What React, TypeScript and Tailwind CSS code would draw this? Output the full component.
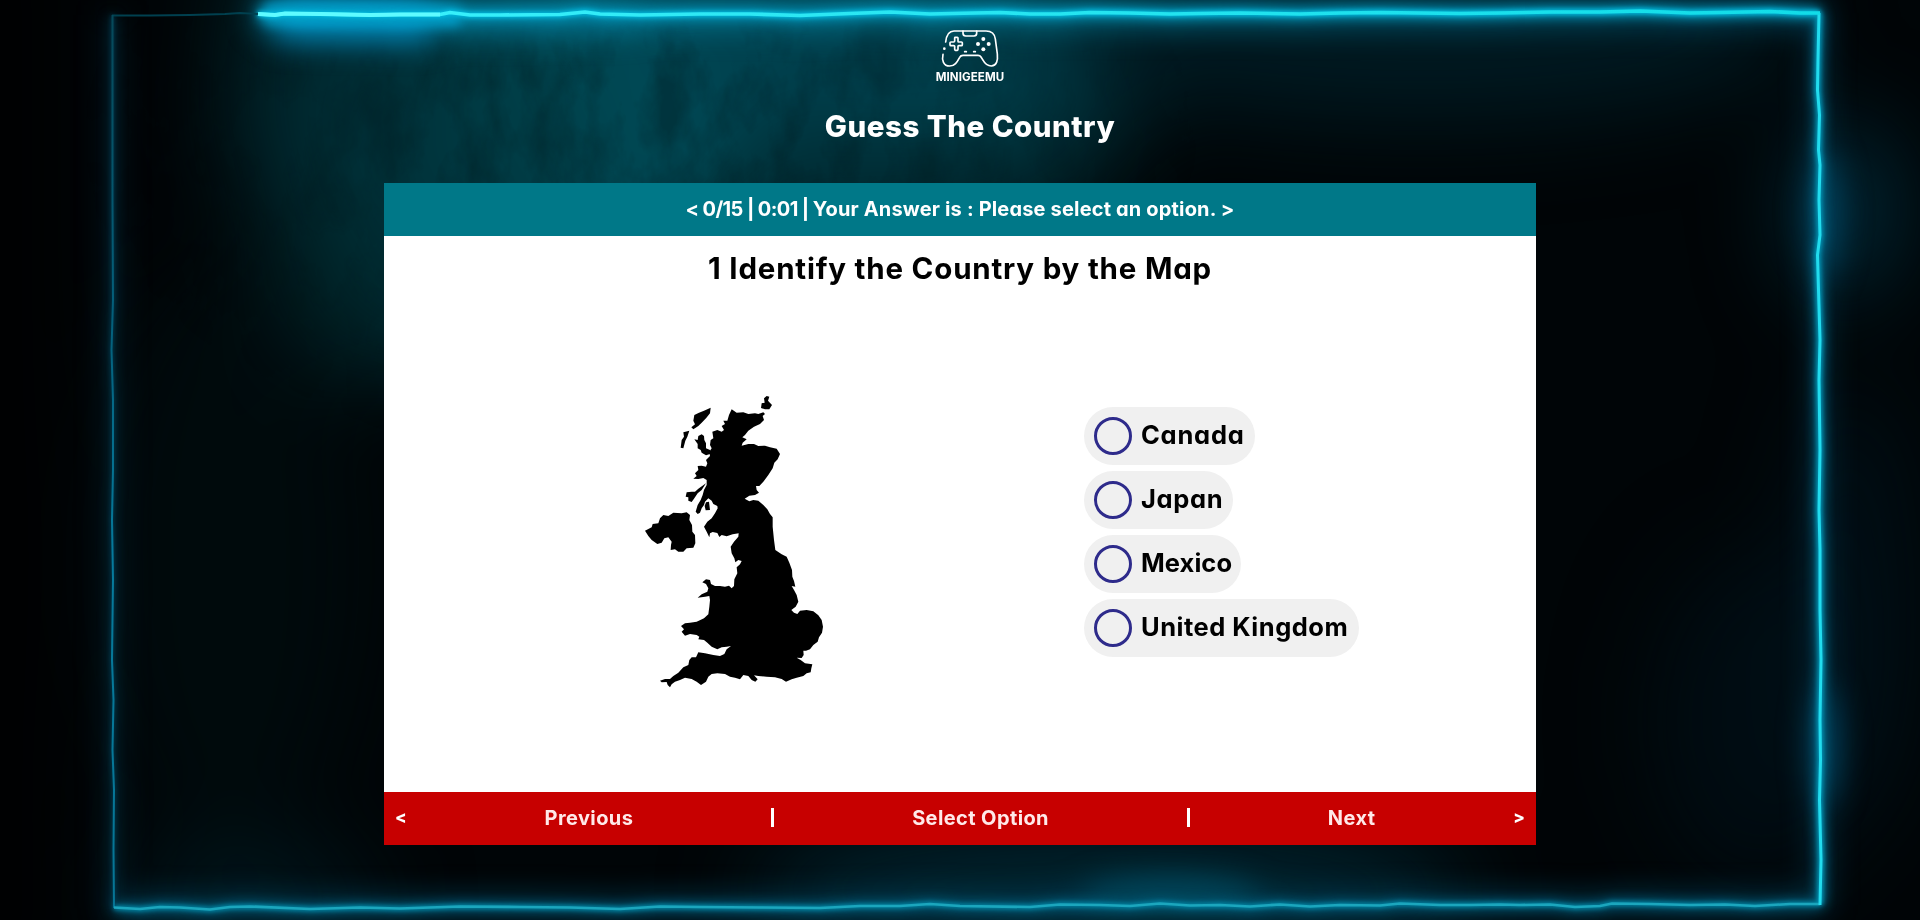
const SANS = "font-['Inter','Liberation_Sans',sans-serif] [font-feature-settings:'cv11']";

const TOP_LINE =
  "M258 14 L275 15 L285 13.5 L320 14 L370 15 L400 14.5 L440 14.5 L450 12.5 L470 15 L500 15 L560 14.5 L585 12 L600 14 L640 15 L700 14 L750 14 L800 15.5 L850 13.5 L890 12 L930 14 L975 13 L1000 12.5 L1030 14 L1060 14 L1090 12.5 L1130 13 L1170 14 L1200 13.5 L1240 13 L1300 14 L1340 13 L1380 12.5 L1420 13 L1460 13.5 L1500 13 L1550 12 L1600 12 L1640 11 L1690 13 L1720 12.5 L1770 11.5 L1800 13 L1820 13";
const RIGHT_LINE =
  "M1819 13 L1818 60 L1817.5 90 L1819.5 115 L1818.5 150 L1820 165 L1819 200 L1820 235 L1817.5 255 L1818.5 290 L1820 340 L1819 380 L1820 450 L1819 510 L1820 550 L1820 610 L1821 660 L1820 720 L1820.5 760 L1819.5 800 L1820 820 L1821 860 L1820 905";
const BOTTOM_LINE =
  "M1820 904 L1790 904 L1755 906 L1725 904.5 L1690 905 L1650 904 L1612 903.5 L1600 906 L1575 907 L1550 904.5 L1520 905 L1500 904.5 L1470 905 L1440 905 L1400 903.5 L1380 905.5 L1340 905 L1310 906.5 L1280 904.5 L1250 906.5 L1220 905 L1190 905.5 L1160 903.5 L1130 906 L1100 905 L1060 904.5 L1030 907 L960 906 L930 904 L900 906 L860 906 L820 908 L760 907.5 L700 907 L660 906.5 L620 909 L570 907.5 L520 907 L460 906.5 L400 908.5 L360 907.5 L310 909 L250 906.5 L230 907 L210 909.5 L180 907.5 L160 907 L140 909 L114 907.5";
const LEFT_LINE =
  "M114 908 L113.5 850 L114 790 L112.5 750 L113.5 700 L112 660 L113 580 L112 520 L113 470 L113 400 L111.5 350 L113 300 L112.5 200 L112.5 100 L112.5 15";
const TOP_LEFT_LINE = "M112 15.5 L150 15.5 L190 15 L225 14 L240 13 L258 14";

function Blur({ id, deviation }: { id: string; deviation: number }) {
  return (
    <filter id={id} x="-300" y="-300" width="2520" height="1520" filterUnits="userSpaceOnUse" colorInterpolationFilters="sRGB">
      <feGaussianBlur stdDeviation={deviation} />
    </filter>
  );
}

function Backdrop() {
  return (
    <svg className="absolute inset-0 h-[920px] w-[1920px]" viewBox="0 0 1920 920" fill="none" aria-hidden="true">
      <defs>
        <Blur id="b2" deviation={2} />
        <Blur id="b7" deviation={6} />
        <Blur id="b16" deviation={15} />
        <Blur id="b50" deviation={46} />
        <filter id="grain" x="0" y="0" width="1920" height="920" filterUnits="userSpaceOnUse" colorInterpolationFilters="sRGB">
          <feTurbulence type="fractalNoise" baseFrequency="0.02 0.011" numOctaves="5" seed="8" />
          <feColorMatrix values="0 0 0 0 0  0 0 0 0 0.06  0 0 0 0 0.07  2.6 0 0 0 -1" />
        </filter>
        <linearGradient id="topStroke" x1="258" x2="1820" y1="0" y2="0" gradientUnits="userSpaceOnUse">
          <stop offset="0" stopColor="#3df4ff" />
          <stop offset="0.3" stopColor="#2ee8f4" />
          <stop offset="1" stopColor="#12dce8" />
        </linearGradient>
        <linearGradient id="topGlow" x1="258" x2="1820" y1="0" y2="0" gradientUnits="userSpaceOnUse">
          <stop offset="0" stopColor="#0088ae" />
          <stop offset="0.5" stopColor="#007c99" />
          <stop offset="1" stopColor="#004a66" />
        </linearGradient>
        <linearGradient id="leftStroke" x1="0" x2="0" y1="15" y2="908" gradientUnits="userSpaceOnUse">
          <stop offset="0" stopColor="#06495a" />
          <stop offset="0.35" stopColor="#04607c" />
          <stop offset="0.6" stopColor="#067a9c" />
          <stop offset="1" stopColor="#067595" />
        </linearGradient>
      </defs>
      <rect width="1920" height="920" fill="#000507" />
      <g filter="url(#b50)">
        <rect x="-100" y="-100" width="170" height="1120" fill="#000102" />
        <path d="M250 -60 H1300 L1180 70 L1060 220 L700 300 L560 380 L330 370 L230 130 Z" fill="#002930" />
        <ellipse cx="600" cy="100" rx="150" ry="150" fill="#004a56" />
        <ellipse cx="470" cy="170" rx="130" ry="150" fill="#003840" opacity="0.7" />
        <ellipse cx="900" cy="40" rx="260" ry="100" fill="#004452" opacity="0.85" />
        <ellipse cx="1420" cy="30" rx="380" ry="90" fill="#001a22" />
        <ellipse cx="330" cy="290" rx="70" ry="90" fill="#00252a" opacity="0.8" />
        <ellipse cx="230" cy="560" rx="130" ry="300" fill="#000b0e" opacity="0.8" />
        <ellipse cx="1110" cy="890" rx="360" ry="60" fill="#002632" />
        <ellipse cx="250" cy="900" rx="130" ry="50" fill="#00161d" />
        <ellipse cx="1760" cy="720" rx="110" ry="170" fill="#000c12" />
        <ellipse cx="1845" cy="210" rx="55" ry="90" fill="#002735" />
        <ellipse cx="1850" cy="600" rx="60" ry="220" fill="#00121a" opacity="0.8" />
      </g>
      <g className="[mask-image:radial-gradient(ellipse_560px_330px_at_640px_120px,black_30%,transparent)]">
        <rect y="18" width="1920" height="886" filter="url(#grain)" opacity="0.32" />
      </g>
      <g filter="url(#b16)">
        <path d="M275 16 L430 18" stroke="#0095d0" strokeWidth="46" />
        <path d="M430 18 L640 16" stroke="#0088aa" strokeWidth="28" opacity="0.8" />
        <path d={TOP_LINE} stroke="url(#topGlow)" strokeWidth="24" opacity="0.85" />
        <path d={RIGHT_LINE} stroke="#005577" strokeWidth="10" opacity="0.8" />
        <path d={BOTTOM_LINE} stroke="#005878" strokeWidth="15" opacity="0.8" />
        <path d={LEFT_LINE} stroke="#003a50" strokeWidth="10" opacity="0.6" />
        <ellipse cx="1824" cy="215" rx="16" ry="65" fill="#004764" />
        <ellipse cx="1824" cy="745" rx="15" ry="65" fill="#004866" />
        <ellipse cx="1170" cy="895" rx="90" ry="18" fill="#004a60" />
      </g>
      <g filter="url(#b7)">
        <path d="M264 14 L460 15" stroke="#00b4e8" strokeWidth="20" />
        <path d={TOP_LINE} stroke="#0093b6" strokeWidth="11" />
        <path d={RIGHT_LINE} stroke="#00789c" strokeWidth="8" />
        <path d={BOTTOM_LINE} stroke="#006a8c" strokeWidth="7" />
        <path d={LEFT_LINE} stroke="#003f58" strokeWidth="5" opacity="0.7" />
      </g>
      <g filter="url(#b2)">
        <path d={TOP_LINE} stroke="#00bce0" strokeWidth="6" />
        <path d={RIGHT_LINE} stroke="#0098b8" strokeWidth="6" />
        <path d={BOTTOM_LINE} stroke="#0087a6" strokeWidth="5" />
        <path d={LEFT_LINE} stroke="#00506e" strokeWidth="3" opacity="0.7" />
      </g>
      <path d={TOP_LEFT_LINE} stroke="#00404f" strokeWidth="1.8" />
      <path d={LEFT_LINE} stroke="url(#leftStroke)" strokeWidth="2" />
      <path d={BOTTOM_LINE} stroke="#1ba6bd" strokeWidth="2.6" />
      <path d={RIGHT_LINE} stroke="#22dcee" strokeWidth="3" />
      <path d={TOP_LINE} stroke="url(#topStroke)" strokeWidth="3.6" />
      <path d="M258 14 L275 15 L285 13.5 L320 14 L370 15 L400 14.5 L440 14.5" stroke="#5ffbff" strokeWidth="4" />
    </svg>
  );
}

function Logo() {
  return (
    <div className="flex flex-col items-center">
      <svg className="h-[40px] w-[60px]" viewBox="120 57 180 120" fill="none" stroke="#fff" strokeWidth="5" strokeLinecap="round" strokeLinejoin="round" aria-hidden="true">
        <path d="M137 96 C139 78 145 63 162 63 H258 C275 63 284 71 286 87 L292 132 C294 152 290 167 274 168 C261 168 254 160 248 149 L243 141 Q240 136 234 136 H189 Q182 136 179 142 C171 157 164 168 149 168 C130 168 125 150 129 133" />
        <path d="M189 63 V70 Q189 78 197 78 H222 Q230 78 230 70 V63" />
        <path d="M164 83 Q164 82 166 82 H172 Q174 82 174 84 V94 Q174 96 176 96 H184 Q187 96 187 98 V104 Q187 107 184 107 H176 Q174 107 174 109 V118 Q174 121 172 121 H166 Q164 121 164 118 V109 Q164 107 161 107 H153 Q150 107 150 104 V98 Q150 96 153 96 H161 Q164 96 164 93 Z" />
        <path d="M194 125 H199 M221 125 H226" />
        <g fill="#fff" stroke="none">
          <circle cx="133" cy="116" r="4" />
          <circle cx="250" cy="87" r="6" />
          <circle cx="234" cy="102" r="6" />
          <circle cx="266" cy="102" r="6" />
          <circle cx="250" cy="118" r="6" />
        </g>
      </svg>
      <span className="mt-[2px] text-[11.5px] leading-[13px] font-bold tracking-[0.1px]">MINIGEEMU</span>
    </div>
  );
}

function UnitedKingdomMap() {
  return (
    <svg className="h-[310px] w-[200px]" viewBox="0 0 600 930" fill="#000" role="img">
      <path d="M305 88 L320 98 L340 97 L355 102 L375 100 L385 102 L400 97 L405 102 L398 108 L402 120 L390 132 L372 140 L355 152 L345 165 L337 172 L350 178 L338 188 L335 197 L355 192 L372 192 L385 198 L405 197 L420 202 L440 206 L450 222 L443 238 L433 248 L428 265 L415 285 L400 305 L388 318 L378 318 L380 330 L387 338 L375 345 L358 347 L344 356 L358 364 L370 360 L385 362 L400 375 L412 388 L420 402 L428 412 L428 440 L432 480 L436 510 L455 523 L470 530 L478 548 L486 570 L487 590 L492 603 L496 620 L485 618 L492 630 L500 645 L505 665 L497 680 L484 690 L492 698 L502 702 L510 692 L530 690 L550 694 L565 706 L575 720 L579 740 L576 758 L567 772 L563 785 L550 795 L540 808 L528 812 L520 812 L521 825 L515 834 L500 833 L512 840 L525 850 L547 853 L544 865 L542 877 L530 880 L520 888 L500 893 L485 898 L468 905 L455 897 L435 892 L410 890 L385 888 L372 886 L383 898 L376 905 L365 900 L355 888 L340 885 L330 898 L315 893 L300 890 L285 882 L262 880 L245 882 L235 890 L228 905 L213 915 L200 905 L185 897 L165 893 L150 900 L135 905 L125 913 L120 922 L113 915 L110 906 L95 907 L90 902 L105 897 L120 897 L130 888 L145 878 L160 862 L175 855 L178 840 L185 832 L198 832 L205 817 L225 820 L250 825 L270 828 L283 822 L290 808 L303 798 L290 800 L275 802 L262 808 L245 800 L232 788 L222 780 L205 778 L208 770 L200 765 L180 762 L165 767 L155 755 L162 748 L153 738 L165 730 L180 728 L200 725 L222 715 L235 703 L238 680 L240 660 L238 648 L225 650 L203 653 L215 643 L232 635 L235 625 L228 612 L217 607 L228 598 L240 600 L243 612 L255 618 L270 618 L285 620 L297 617 L305 625 L312 618 L313 598 L322 580 L320 562 L330 553 L335 543 L325 540 L316 547 L313 535 L305 520 L302 500 L312 485 L325 470 L326 460 L308 463 L290 469 L275 465 L268 471 L262 459 L248 456 L240 460 L238 472 L230 455 L222 440 L232 425 L245 415 L255 400 L263 385 L262 378 L250 372 L245 362 L235 355 L225 365 L222 375 L215 385 L210 398 L203 402 L197 395 L203 375 L212 360 L218 345 L222 330 L230 315 L230 300 L220 294 L205 297 L190 296 L200 288 L195 280 L205 270 L203 258 L215 257 L228 260 L232 250 L228 240 L240 228 L238 215 L245 205 L240 195 L242 180 L250 175 L247 155 L262 150 L275 155 L282 150 L275 138 L285 132 L280 122 L292 122 L297 105 Z" />
      <path d="M228 310 L215 330 L203 340 L193 355 L185 366 L175 362 L175 352 L167 350 L170 337 L185 335 L195 335 L205 326 Z" />
      <path d="M228 367 L237 365 L240 390 L227 391 L224 378 Z" />
      <path d="M193 178 L203 180 L205 168 L215 163 L222 168 L223 180 L228 190 L228 205 L240 210 L240 222 L228 226 L215 218 L212 210 L203 205 L203 192 Z" />
      <path d="M242 83 L240 100 L228 115 L215 128 L205 138 L190 148 L184 142 L195 133 L190 122 L193 105 L207 98 L222 92 Z" />
      <path d="M178 152 L172 170 L166 182 L160 205 L152 203 L155 180 L162 170 L160 157 Z" />
      <path d="M402 55 L410 48 L418 50 L414 62 L426 75 L418 88 L405 88 L393 84 L395 70 L404 68 Z" />
      <path d="M45 452 L65 442 L68 432 L85 430 L90 415 L100 405 L115 408 L130 398 L155 400 L170 397 L180 405 L178 420 L186 435 L187 455 L195 465 L196 490 L190 503 L170 505 L160 515 L145 515 L135 508 L122 510 L123 495 L125 485 L115 472 L103 475 L95 488 L82 492 L65 480 L55 468 Z" />
    </svg>
  );
}

const options = [
  { label: "Canada", width: "w-[171px]", tracking: "tracking-[0.75px]" },
  { label: "Japan", width: "w-[149px]", tracking: "tracking-[0.65px]" },
  { label: "Mexico", width: "w-[157px]", tracking: "tracking-[0.05px]" },
  { label: "United Kingdom", width: "w-[275px]", tracking: "tracking-[0.5px]" },
];

function Option({ label, width, tracking }: { label: string; width: string; tracking: string }) {
  return (
    <button className={`flex h-[58px] items-center gap-[9px] rounded-full bg-[#f0f0f0] pl-[10px] ${width}`}>
      <span className="size-[38px] shrink-0 rounded-full border-3 border-[#2e2b8b]" />
      <span className={`pb-[2px] text-[25.5px] leading-[30px] font-bold whitespace-nowrap text-black ${tracking}`}>{label}</span>
    </button>
  );
}

export default function App() {
  return (
    <div className={`relative h-[920px] w-[1920px] overflow-hidden bg-black text-white ${SANS}`}>
      <Backdrop />
      <div className="relative flex h-full flex-col items-center">
        <header className="flex h-[183px] flex-col items-center pt-[29px] pl-[20px]">
          <Logo />
          <h1 className="mt-[24px] text-[29.5px] leading-[36px] font-extrabold tracking-[0.5px]">Guess The Country</h1>
        </header>

        <main className="flex h-[662px] w-[1152px] flex-col">
          <div className="flex h-[53px] items-center justify-center bg-[#007888] pb-[2px] text-[20px] font-bold whitespace-pre">
            <span className="tracking-[-0.6px]">&lt; 0/15 | 0:01 | </span>
            <span className="tracking-[0.17px]">Your Answer is : Please select an option. &gt;</span>
          </div>
          <section className="flex h-[556px] flex-col bg-white">
            <h2 className="pt-[14px] text-center text-[29.5px] leading-[36px] font-bold tracking-[0.8px] text-black">
              1 Identify the Country by the Map
            </h2>
            <div className="grid grid-cols-2">
              <div className="pt-[94px] pl-[246px]">
                <UnitedKingdomMap />
              </div>
              <div className="flex flex-col gap-[6px] pt-[121px] pl-[124px]">
                {options.map((o) => (
                  <Option key={o.label} {...o} />
                ))}
              </div>
            </div>
          </section>
          <nav className="flex h-[53px] items-center justify-between bg-[#c70000] px-[11px] pb-[2px] text-[20px] font-bold tracking-[0.4px]">
            <span className="text-[17px] font-extrabold tracking-normal">&lt;</span>
            <button className="text-[#ffe9e9]">Previous</button>
            <span className="h-[19px] w-[3px] bg-white" />
            <button className="text-[#ffe9e9]">Select Option</button>
            <span className="h-[19px] w-[3px] bg-white" />
            <button className="text-[#ffe9e9]">Next</button>
            <span className="text-[17px] font-extrabold tracking-normal">&gt;</span>
          </nav>
        </main>
      </div>
    </div>
  );
}
